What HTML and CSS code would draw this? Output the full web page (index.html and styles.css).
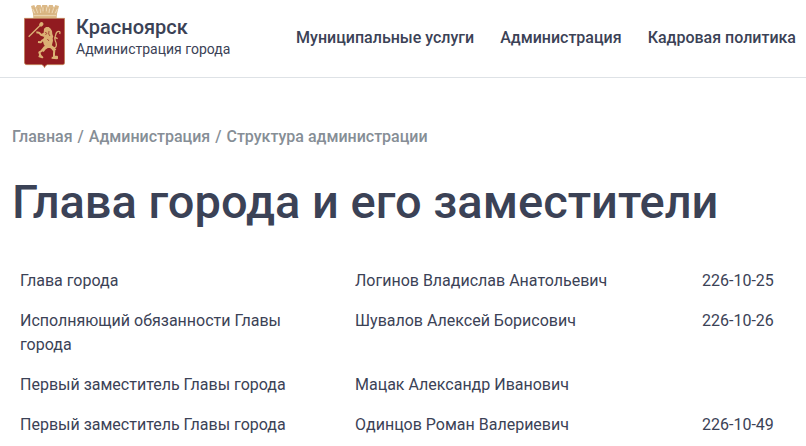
FILE: index.html
```html
<!DOCTYPE html>
<html lang="ru">
<head>
    <meta charset="UTF-8">
    <meta name="viewport" content="width=device-width, initial-scale=1.0">
    <title>Глава города и его заместители</title>
    <link rel="stylesheet" href="styles.css">
</head>
<body>

    <header class="header">
        <a class="brand" href="#">
            <svg class="brand-logo" viewBox="72 15 123 189" aria-hidden="true">
                <!-- Crown -->
                <path fill="#dcb987" d="M93 18l10-3 3 8 5-8 11 0 2 8 3-9 14 0 3 9 3-8 11 0 4 8 4-8 11 3-6 23-1 13H100l-1-13z"/>
                <path fill="none" stroke="#f6e8d0" stroke-width="2" d="M98 27l7 14M108 25l5 15M120 26l2 13M129 22l0 12M140 22l-1 12M149 26l-2 13M161 25l-5 15M172 27l-7 14M101 46H168"/>
                <path fill="none" stroke="#c49a61" stroke-width="1" d="M103 24l7 14M116 24l3 14M134 22v15M154 24l-3 14M166 24l-6 14M100 42H169"/>
                <!-- Shield -->
                <path fill="#911b20" stroke="#c9965c" stroke-width="2" d="M73 55H194V188q0 6-6 6H142q-6 1-8.500 9-2.500-8-8.500-9H80q-6 0-7-6z"/>
                <!-- Lion body, paws and hind legs -->
                <path fill="#dcb174" d="M132 86l6-5 8 0 6 5 4 7 1 9 3 8-2 4 1 8-3 12-2 10-16 0-7-12-3-12 5-10-7-3-1-6 6-3z"/>
                <g fill="none" stroke="#dcb174" stroke-linejoin="round">
                    <path stroke-width="6" d="M134 107l-10-2-7-7-8-1"/>
                    <path stroke-width="6" d="M136 121l-9 0-5 6-8-1"/>
                    <path stroke-width="10" d="M147 136l-13 8-7 9"/>
                    <path stroke-width="6" d="M129 150l-11 7 3 9 6 6-11-4"/>
                    <path stroke-width="10" d="M148 136l11 9 6 7"/>
                    <path stroke-width="6" d="M163 151l-1 9 0 10 9 0 0 5-16-2"/>
                </g>
                <!-- Sceptre and tail -->
                <ellipse cx="124" cy="73" rx="6" ry="7" fill="#dcb174" transform="rotate(40 124 73)"/>
                <path fill="none" stroke="#dcb174" stroke-width="4" d="M86 110L121 76"/>
                <path fill="none" stroke="#dcb174" stroke-width="4" d="M158 144q12 0 11-10 0-6-3-11-4-9 1-18 2-11 9-11 6 0 3 8M165 112l8 4"/>
                <path fill="none" stroke="#911b20" stroke-width="2" d="M135 97l6 3-5 5M147 93l-1 9 4 6M142 117l5 6"/>
            </svg>
            <span class="brand-text">
                <span class="brand-name">Красноярск</span>
                <span class="brand-note">Администрация города</span>
            </span>
        </a>
        <nav class="menu">
            <a href="#">Муниципальные услуги</a>
            <a href="#">Администрация</a>
            <a href="#">Кадровая политика</a>
        </nav>
    </header>

    <main class="container">
        <nav class="breadcrumbs">
            <a href="#">Главная</a>
            <span>/</span>
            <a href="#">Администрация</a>
            <span>/</span>
            <a href="#">Структура администрации</a>
        </nav>

        <h1>Глава города и его заместители</h1>

        <table class="staff">
            <tr>
                <td class="post">Глава города</td>
                <td class="name">Логинов Владислав Анатольевич</td>
                <td class="phone">226-10-25</td>
            </tr>
            <tr>
                <td class="post">Исполняющий обязанности Главы города</td>
                <td class="name">Шувалов Алексей Борисович</td>
                <td class="phone">226-10-26</td>
            </tr>
            <tr>
                <td class="post">Первый заместитель Главы города</td>
                <td class="name">Мацак Александр Иванович</td>
                <td class="phone"></td>
            </tr>
            <tr>
                <td class="post">Первый заместитель Главы города</td>
                <td class="name">Одинцов Роман Валериевич</td>
                <td class="phone">226-10-49</td>
            </tr>
        </table>
    </main>

</body>
</html>
```
FILE: styles.css
```css
body {
    margin: 0;
    font-family: Roboto, sans-serif;
    font-size: 16px;
    line-height: 24px;
    color: #3b4256;
    background-color: #fff;
}

a {
    color: inherit;
    text-decoration: none;
}

.header {
    display: flex;
    justify-content: space-between;
    align-items: center;
    padding: 5px 10px 9px 24px;
    border-bottom: 1px solid #dee2e6;
}

.brand {
    display: flex;
    align-items: center;
    gap: 11px;
}

.brand-logo {
    width: 41px;
    height: 63px;
}

.brand-text {
    display: flex;
    flex-direction: column;
}

.brand-name {
    font-size: 20px;
    font-weight: 500;
    line-height: 24px;
}

.brand-note {
    font-size: 14px;
    line-height: 20px;
}

.menu {
    display: flex;
    gap: 26px;
    padding-top: 2px;
    font-weight: 500;
    white-space: nowrap;
}

.container {
    padding: 47px 12px 0;
}

.breadcrumbs {
    display: flex;
    flex-wrap: wrap;
    gap: 5px;
    font-weight: 500;
    color: #868e96;
}

h1 {
    margin: 23px 0 29px;
    font-size: 47px;
    font-weight: 500;
    line-height: 60px;
}

.staff {
    width: 100%;
    border-collapse: collapse;
    table-layout: fixed;
}

.staff td {
    padding: 8px;
    vertical-align: top;
}

.staff .post {
    width: 335px;
    padding-right: 24px;
    box-sizing: border-box;
}

.staff .phone {
    width: 100px;
    box-sizing: border-box;
}
```
